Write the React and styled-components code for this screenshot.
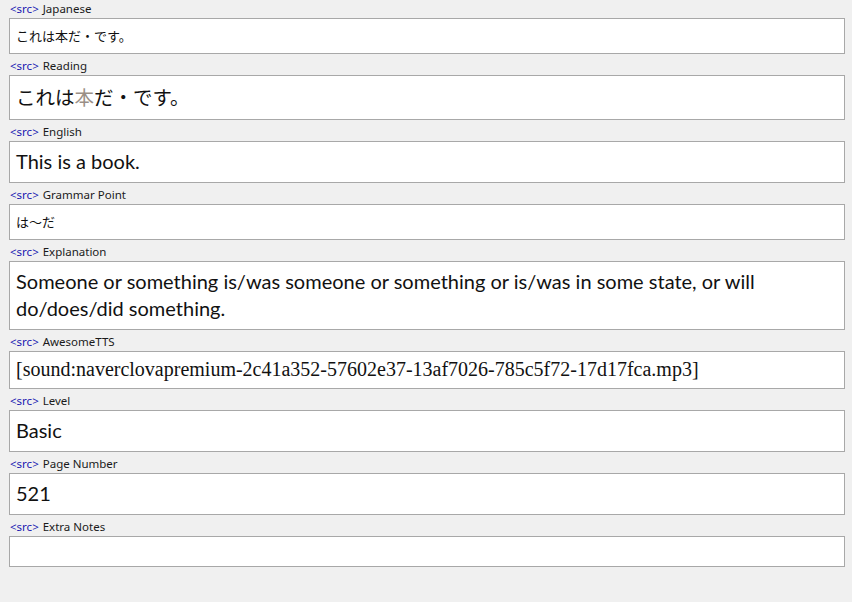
import React from "react";
import styled, { createGlobalStyle } from "styled-components";

const GlobalStyle = createGlobalStyle`
  html, body {
    margin: 0;
    padding: 0;
    background: #f0f0f0;
  }
  body {
    font-family: "Lato", "Noto Sans CJK JP", sans-serif;
    color: #000;
  }
`;

const Editor = styled.div`
  display: flex;
  flex-direction: column;
  padding: 0 7px 0 9px;
`;

const Field = styled.div`
  display: flex;
  flex-direction: column;
`;

const Label = styled.div`
  height: 18px;
  font-family: "Noto Sans", sans-serif;
  font-size: 11.5px;
  line-height: 18px;
  color: #1a1a1a;
  padding-left: 1px;
  white-space: nowrap;
  overflow: hidden;
`;

const Src = styled.span`
  color: #1818b0;
  margin-right: 4px;
`;

const fontFor = (kind) => {
  if (kind === "serif") return '"Liberation Serif", serif';
  if (kind === "jp") return '"Noto Sans CJK JP", sans-serif';
  return '"Lato", "Noto Sans", sans-serif';
};

const Box = styled.div`
  background: #fff;
  border: 1px solid #a8a8a8;
  padding: 6px 6px 7px 6px;
  font-family: ${(p) => fontFor(p.$kind)};
  font-size: ${(p) => p.$size}px;
  line-height: ${(p) => p.$line}px;
  height: ${(p) => p.$height}px;
  overflow: hidden;
  color: #111;
  margin-bottom: 3px;
`;

const Faded = styled.span`
  color: #9a8f86;
`;

const fields = [
  { name: "Japanese", kind: "jp", size: 13, line: 21, height: 36, content: "これは本だ・です。" },
  {
    name: "Reading",
    kind: "jp",
    size: 19.5,
    line: 30,
    height: 45,
    content: (
      <>
        これは<Faded>本</Faded>だ・です。
      </>
    ),
  },
  { name: "English", size: 20, line: 27, height: 42, content: "This is a book." },
  { name: "Grammar Point", kind: "jp", size: 13, line: 21, height: 36, content: "は〜だ" },
  {
    name: "Explanation",
    size: 20,
    line: 27,
    height: 69,
    content:
      "Someone or something is/was someone or something or is/was in some state, or will do/does/did something.",
  },
  {
    name: "AwesomeTTS",
    kind: "serif",
    size: 20,
    line: 23,
    height: 38,
    content: "[sound:naverclovapremium-2c41a352-57602e37-13af7026-785c5f72-17d17fca.mp3]",
  },
  { name: "Level", size: 20, line: 27, height: 42, content: "Basic" },
  { name: "Page Number", size: 20, line: 27, height: 42, content: "521" },
  { name: "Extra Notes", size: 20, line: 16, height: 31, content: null },
];

export default function App() {
  return (
    <>
      <GlobalStyle />
      <Editor>
        {fields.map((f) => (
          <Field key={f.name}>
            <Label>
              <Src>&lt;src&gt;</Src>
              {f.name}
            </Label>
            <Box
              $kind={f.kind}
              $size={f.size}
              $line={f.line}
              $height={f.height - 15}
            >
              {f.content}
            </Box>
          </Field>
        ))}
      </Editor>
    </>
  );
}
